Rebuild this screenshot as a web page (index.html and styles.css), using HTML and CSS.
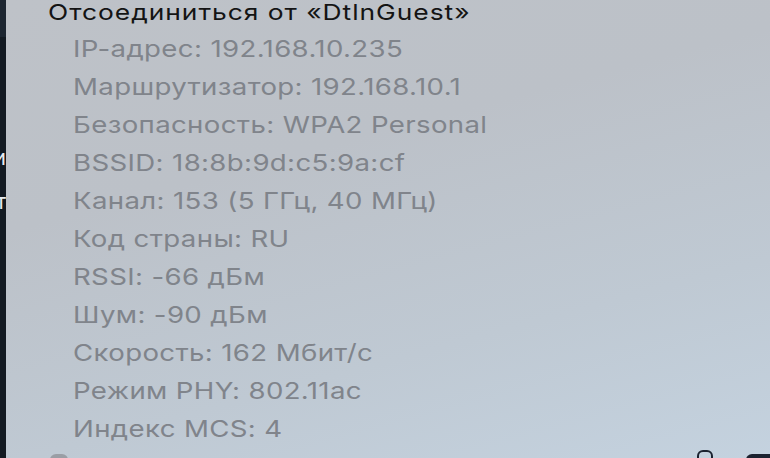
FILE: index.html
```html
<!DOCTYPE html>
<html lang="ru">
<head>
    <meta charset="UTF-8">
    <title>Wi-Fi</title>
    <link rel="stylesheet" href="styles.css">
</head>
<body>
    <div class="screen">
        <div class="desk">
            <div class="desk-top"></div>
            <div class="desk-char desk-char-1">ви</div>
            <div class="desk-char desk-char-2">ет</div>
        </div>
        <div class="menu">
            <div class="menu-title"><span class="wide">Отсоединиться от «DtlnGuest»</span></div>
            <ul class="details">
                <li><span class="wide">IP-адрес: 192.168.10.235</span></li>
                <li><span class="wide">Маршрутизатор: 192.168.10.1</span></li>
                <li><span class="wide">Безопасность: WPA2 Personal</span></li>
                <li><span class="wide">BSSID: 18:8b:9d:c5:9a:cf</span></li>
                <li><span class="wide">Канал: 153 (5 ГГц, 40 МГц)</span></li>
                <li><span class="wide">Код страны: RU</span></li>
                <li><span class="wide">RSSI: -66 дБм</span></li>
                <li><span class="wide">Шум: -90 дБм</span></li>
                <li><span class="wide">Скорость: 162 Мбит/с</span></li>
                <li><span class="wide">Режим PHY: 802.11ac</span></li>
                <li><span class="wide">Индекс MCS: 4</span></li>
            </ul>
            <div class="peek peek-left"></div>
            <div class="peek peek-mid"></div>
            <div class="peek peek-right"></div>
        </div>
    </div>
</body>
</html>
```

FILE: styles.css
```css
body {
    margin: 0;
    font-family: Inter, "Noto Sans", sans-serif;
    overflow: hidden;
}
.screen {
    display: flex;
    width: 770px;
    height: 458px;
}
.desk {
    width: 6px;
    flex-shrink: 0;
    background-color: #131a22;
    position: relative;
    overflow: hidden;
}
.desk-top {
    height: 37px;
    background-color: #1d2631;
}
.desk-char {
    position: absolute;
    right: 0;
    color: #e8ecf0;
    font-size: 21px;
    line-height: 24px;
    white-space: nowrap;
}
.desk-char-1 {
    top: 146px;
}
.desk-char-2 {
    top: 190px;
}
.menu {
    flex: 1;
    position: relative;
    padding-left: 42px;
    background: linear-gradient(165deg, #bec2c8 0%, #bcc1c8 35%, #bfc9d3 70%, #c4d2df 100%);
}
.wide {
    display: inline-block;
    white-space: nowrap;
    transform: scaleX(1.2);
    transform-origin: left center;
}
.menu-title {
    font-size: 22px;
    line-height: 24px;
    letter-spacing: 0.8px;
    color: #141414;
}
.details {
    list-style: none;
    margin: 6px 0 0 0;
    padding: 0 0 0 25px;
}
.details li {
    font-size: 23px;
    line-height: 38px;
    letter-spacing: 0.3px;
    color: #80848b;
}
.peek {
    position: absolute;
    bottom: -8px;
    height: 12px;
    border-radius: 6px;
}
.peek-left {
    left: 44px;
    width: 18px;
    background-color: #9a9ea5;
}
.peek-mid {
    left: 691px;
    width: 12px;
    border: 2px solid #1b2230;
    background: none;
}
.peek-right {
    left: 740px;
    width: 30px;
    background-color: #1b2230;
}
```
